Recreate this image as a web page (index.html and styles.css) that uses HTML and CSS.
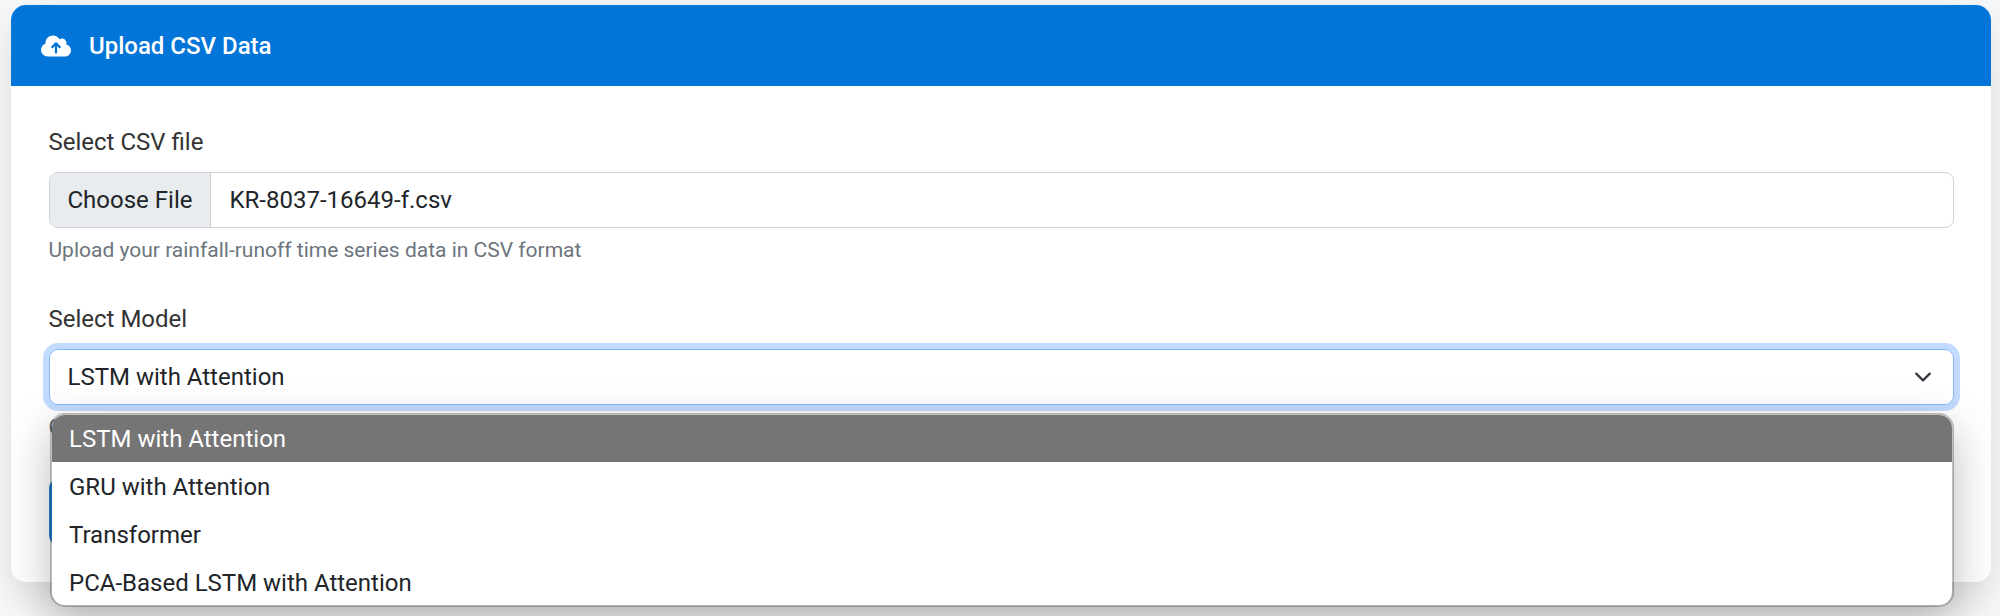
FILE: index.html
```html
<!DOCTYPE html>
<html lang="en">
<head>
<meta charset="utf-8">
<title>Upload CSV Data</title>
<link rel="stylesheet" href="styles.css">
</head>
<body>
<main class="card">
  <header class="card-header">
    <svg class="icon-cloud" viewBox="0 0 640 512" aria-hidden="true"><path fill="currentColor" d="M144 480C64.5 480 0 415.5 0 336c0-62.8 40.2-116.2 96.2-135.9c-.1-2.7-.2-5.4-.2-8.1c0-88.4 71.6-160 160-160c59.3 0 111 32.2 138.7 80.2C409.9 102 428.3 96 448 96c53 0 96 43 96 96c0 12.2-2.3 23.8-6.4 34.6C596 238.4 640 290.1 640 352c0 70.7-57.3 128-128 128H144zm79-217c-9.4 9.4-9.4 24.6 0 33.9s24.6 9.4 33.9 0l39-39V392c0 13.3 10.7 24 24 24s24-10.7 24-24V257.9l39 39c9.4 9.4 24.6 9.4 33.9 0s9.4-24.6 0-33.9l-80-80c-9.4-9.4-24.6-9.4-33.9 0l-80 80z"/></svg>
    <h1 class="card-title">Upload CSV Data</h1>
  </header>
  <form class="card-body">
    <div class="field">
      <div class="label">Select CSV file</div>
      <div class="file-input">
        <span class="file-button">Choose File</span>
        <span class="file-name">KR-8037-16649-f.csv</span>
      </div>
      <div class="help">Upload your rainfall-runoff time series data in CSV format</div>
    </div>
    <div class="field">
      <div class="label">Select Model</div>
      <div class="select">
        <span>LSTM with Attention</span>
        <svg class="chevron" viewBox="0 0 16 16" aria-hidden="true"><path d="m2 5 6 6 6-6" fill="none" stroke="#343a40" stroke-width="2" stroke-linecap="round" stroke-linejoin="round"/></svg>
        <ul class="menu">
          <li class="option selected">LSTM with Attention</li>
          <li class="option">GRU with Attention</li>
          <li class="option">Transformer</li>
          <li class="option">PCA-Based LSTM with Attention</li>
        </ul>
      </div>
      <div class="help">C</div>
    </div>
    <div class="submit"></div>
  </form>
</main>
</body>
</html>
```
FILE: styles.css
```css
* {
  box-sizing: border-box;
}

html {
  height: 100%;
  overflow: hidden;
}

body {
  height: 100%;
  margin: 0;
  padding: 5px 9px 0 11px;
  overflow: hidden;
  background: #f8f9fb;
  color: #212529;
  font-family: Roboto, "Liberation Sans", sans-serif;
  font-size: 24px;
  line-height: 36px;
}

.card {
  height: 577px;
  border-radius: 15px;
  background: #fff;
  box-shadow: 0 15px 45px rgba(0, 0, 0, 0.12);
}

.card-header {
  display: flex;
  align-items: center;
  gap: 18.5px;
  height: 81px;
  padding: 0 29.5px;
  border-radius: 15px 15px 0 0;
  background: #0275d8;
  color: #fff;
}

.icon-cloud {
  width: 30px;
  height: 24px;
}

.card-title {
  margin: 0;
  font-size: 24px;
  font-weight: 500;
}

.card-body {
  padding: 38px 37px 0 38px;
}

.field {
  height: 177px;
}

.label {
  margin: 0 0 12px -0.5px;
  color: #333;
}

.file-input {
  display: flex;
  height: 56px;
  overflow: hidden;
  border: 1px solid #ced4da;
  border-radius: 9px;
}

.file-button {
  width: 161px;
  padding: 9px 17.5px;
  border-right: 1px solid #ced4da;
  background: #e9ecef;
  white-space: nowrap;
}

.file-name {
  padding: 9px 18.5px;
}

.help {
  margin: 7px 0 0 -0.5px;
  color: #6c757d;
  font-size: 21px;
  line-height: 31px;
}

.select {
  position: relative;
  display: flex;
  align-items: center;
  justify-content: space-between;
  height: 56px;
  padding: 0 21px 0 17.5px;
  border: 1px solid #86b7fe;
  border-radius: 9px;
  box-shadow: 0 0 0 6px #c2dbfe;
}

.chevron {
  width: 18px;
  height: 18px;
}

.menu {
  position: absolute;
  top: 63px;
  right: -1px;
  left: 0;
  margin: 0;
  padding: 0;
  overflow: hidden;
  border: 2px solid rgba(0, 0, 0, 0.25);
  border-radius: 15px;
  background: #fff;
  background-clip: padding-box;
  box-shadow: 0 15px 45px rgba(0, 0, 0, 0.26);
  list-style: none;
}

.option {
  height: 48px;
  padding: 7px 17px 5px;
}

.option:last-child {
  height: 47px;
}

.selected {
  height: 47px;
  padding-top: 6px;
  background: #757575;
  color: #fff;
}

.submit {
  width: 240px;
  height: 66px;
  margin-top: 1px;
  border-radius: 9px;
  background: #2b8be0;
}
```
